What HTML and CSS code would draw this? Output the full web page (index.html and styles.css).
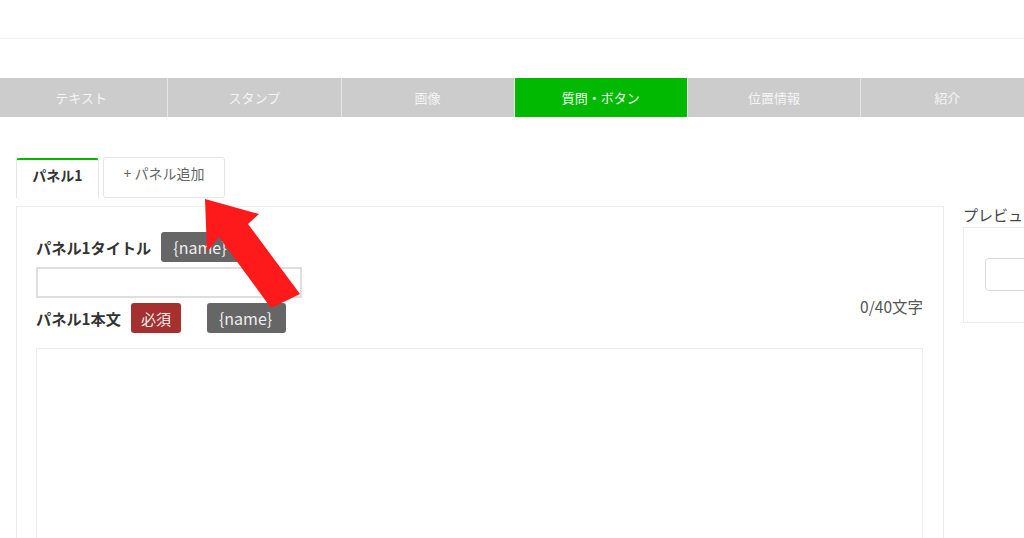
FILE: index.html
```html
<!DOCTYPE html>
<html lang="ja">
<head>
<meta charset="utf-8">
<link rel="stylesheet" href="styles.css">
</head>
<body>
<div class="page">
  <header class="topbar"></header>
  <nav class="typebar">
    <div class="typetab">テキスト</div>
    <div class="typetab">スタンプ</div>
    <div class="typetab">画像</div>
    <div class="typetab active">質問・ボタン</div>
    <div class="typetab">位置情報</div>
    <div class="typetab">紹介</div>
  </nav>
  <main class="content">
    <section class="editor">
      <div class="paneltabs">
        <div class="ptab current">パネル1</div>
        <div class="ptab add">+ パネル追加</div>
      </div>
      <div class="panel">
        <div class="row">
          <span class="label">パネル1タイトル</span>
          <span class="badge gray">{name}</span>
        </div>
        <input class="textinput" type="text">
        <div class="row row2">
          <div class="rowleft">
            <span class="label">パネル1本文</span>
            <span class="badge red">必須</span>
            <span class="badge gray far">{name}</span>
          </div>
          <span class="counter">0/40文字</span>
        </div>
        <div class="textarea"></div>
      </div>
    </section>
    <aside class="preview">
      <div class="preview-title">プレビュー</div>
      <div class="preview-box">
        <div class="preview-input"></div>
      </div>
    </aside>
  </main>
  <svg class="arrow" width="1024" height="538" viewBox="0 0 1024 538">
    <polygon points="205,199 259,214 248,224 300,294 271,308 219,237 207,252" fill="#fe1a1a"/>
  </svg>
</div>
</body>
</html>
```
FILE: styles.css
```css
html, body {
  margin: 0;
  padding: 0;
  background: #fff;
  overflow: hidden;
}
body {
  font-family: "Noto Sans CJK JP", "Noto Sans", sans-serif;
  color: #333;
}
.page {
  position: relative;
  width: 1024px;
  height: 538px;
  overflow: hidden;
}
.topbar {
  height: 38px;
  border-bottom: 1px solid #f1f1f1;
}
.typebar {
  display: flex;
  margin-top: 39px;
  margin-left: -5px;
  height: 39px;
  background: #cccccc;
  width: 1045px;
}
.typetab {
  flex: 0 0 172.25px;
  border-right: 1px solid #e6e6e6;
  display: flex;
  align-items: center;
  justify-content: center;
  color: #f4f4f4;
  font-size: 13px;
}
.typetab.active {
  background: #00b900;
  color: #f0fff0;
}
.content {
  display: flex;
  gap: 20px;
  padding-left: 16px;
  margin-top: 40px;
}
.editor {
  flex: 0 0 928px;
}
.paneltabs {
  display: flex;
  gap: 4px;
  height: 41px;
  margin-bottom: 8px;
}
.ptab {
  box-sizing: border-box;
  display: flex;
  align-items: center;
  justify-content: center;
  font-size: 14px;
  border: 1px solid #e6e6e6;
}
.ptab.current {
  width: 83px;
  margin-top: 1px;
  border-top: 2px solid #00b900;
  border-bottom: none;
  border-radius: 3px 3px 0 0;
  font-weight: bold;
  color: #333;
  padding-bottom: 8px;
}
.ptab.add {
  width: 122px;
  border-radius: 3px;
  color: #666;
  padding-bottom: 9px;
}
.panel {
  border: 1px solid #ededed;
  padding: 25px 20px 0 19px;
  height: 400px;
}
.row {
  display: flex;
  align-items: center;
  height: 30px;
}
.label {
  font-size: 15.2px;
  font-weight: bold;
  color: #333;
}
.badge {
  display: inline-flex;
  align-items: center;
  height: 30px;
  box-sizing: border-box;
  border-radius: 3px;
  color: #eeeeee;
  font-size: 15px;
  margin-left: 10px;
}
.badge.gray {
  background: #666666;
  padding: 0 14px 0 12px;
  font-size: 16px;
}
.badge.red {
  background: #a62f2f;
  padding: 0 10px;
}
.badge.far {
  margin-left: 26px;
}
.textinput {
  display: block;
  box-sizing: border-box;
  margin: 5px 0 5px 0;
  width: 266px;
  height: 31px;
  border: 2px solid #dedede;
  padding: 0;
}
.row2 {
  justify-content: space-between;
  align-items: flex-start;
}
.rowleft {
  display: flex;
  align-items: center;
  height: 30px;
}
.counter {
  font-size: 15.5px;
  color: #555;
  margin-top: -8px;
  line-height: 22px;
}
.textarea {
  margin-top: 15px;
  height: 300px;
  border: 1px solid #ececec;
}
.preview {
  flex: 0 0 300px;
  padding-top: 46px;
  margin-left: -1px;
}
.preview-title {
  font-size: 15px;
  line-height: 24px;
  color: #444;
}
.preview-box {
  border: 1px solid #ececec;
  padding: 30px 0 0 21px;
  box-sizing: border-box;
  height: 96px;
}
.preview-input {
  height: 33px;
  box-sizing: border-box;
  border: 1px solid #dcdcdc;
  border-radius: 4px;
}
.arrow {
  position: absolute;
  left: 0;
  top: 0;
  pointer-events: none;
}
```
